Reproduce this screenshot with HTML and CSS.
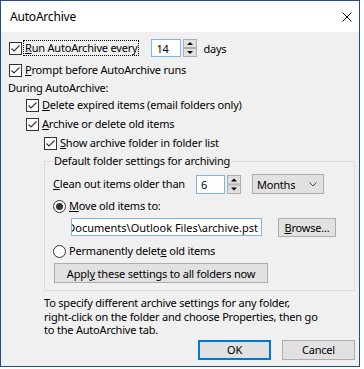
FILE: index.html
```html
<!DOCTYPE html>
<html lang="en">

<head>
    <meta charset="UTF-8">
    <meta name="viewport" content="width=device-width, initial-scale=1.0">
    <title>AutoArchive</title>
    <link rel="stylesheet" href="styles.css">
</head>

<body>
    <div class="window">
        <div class="titlebar">
            <span class="title">AutoArchive</span>
            <svg class="close" width="10" height="10" viewBox="0 0 10 10">
                <path d="M0.5 0.5 L9.5 9.5 M9.5 0.5 L0.5 9.5" stroke="#000" stroke-width="1" fill="none" />
            </svg>
        </div>

        <div class="content">
            <div class="row r-run">
                <span class="check tight"><svg width="13" height="13" viewBox="0 0 13 13"><rect x="0.5" y="0.5" width="12" height="12" fill="#fff" stroke="#333" /><polyline points="2.5,6.5 5,9 10.5,3.5" fill="none" stroke="#333" stroke-width="1.1" /></svg></span>
                <span class="label focus"><u>R</u>un AutoArchive every</span>
                <span class="textbox days-box">14</span>
                <span class="spinner"><svg width="14" height="18" viewBox="0 0 14 18"><rect x="0.5" y="0.5" width="13" height="8" fill="#e1e1e1" stroke="#adadad" /><rect x="0.5" y="9.5" width="13" height="8" fill="#e1e1e1" stroke="#adadad" /><polygon points="4,6 10,6 7,3" fill="#000" /><polygon points="4,12 10,12 7,15" fill="#000" /></svg></span>
                <span class="unit">days</span>
            </div>

            <div class="row r-prompt">
                <span class="check"><svg width="13" height="13" viewBox="0 0 13 13"><rect x="0.5" y="0.5" width="12" height="12" fill="#fff" stroke="#333" /><polyline points="2.5,6.5 5,9 10.5,3.5" fill="none" stroke="#333" stroke-width="1.1" /></svg></span>
                <span class="label"><u>P</u>rompt before AutoArchive runs</span>
            </div>

            <div class="row r-during">
                <span class="label">During AutoArchive:</span>
            </div>

            <div class="row r-delete indent1">
                <span class="check"><svg width="13" height="13" viewBox="0 0 13 13"><rect x="0.5" y="0.5" width="12" height="12" fill="#fff" stroke="#333" /><polyline points="2.5,6.5 5,9 10.5,3.5" fill="none" stroke="#333" stroke-width="1.1" /></svg></span>
                <span class="label"><u>D</u>elete expired items (email folders only)</span>
            </div>

            <div class="row r-archive indent1">
                <span class="check"><svg width="13" height="13" viewBox="0 0 13 13"><rect x="0.5" y="0.5" width="12" height="12" fill="#fff" stroke="#333" /><polyline points="2.5,6.5 5,9 10.5,3.5" fill="none" stroke="#333" stroke-width="1.1" /></svg></span>
                <span class="label"><u>A</u>rchive or delete old items</span>
            </div>

            <div class="row r-show indent2">
                <span class="check"><svg width="13" height="13" viewBox="0 0 13 13"><rect x="0.5" y="0.5" width="12" height="12" fill="#fff" stroke="#333" /><polyline points="2.5,6.5 5,9 10.5,3.5" fill="none" stroke="#333" stroke-width="1.1" /></svg></span>
                <span class="label"><u>S</u>how archive folder in folder list</span>
            </div>

            <fieldset class="group">
                <legend>Default folder settings for archiving</legend>

                <div class="row r-clean">
                    <span class="label clean-label"><u>C</u>lean out items older than</span>
                    <span class="textbox months-box">6</span>
                    <span class="spinner"><svg width="14" height="19" viewBox="0 0 14 19"><rect x="0.5" y="0.5" width="13" height="8.5" fill="#e1e1e1" stroke="#adadad" /><rect x="0.5" y="10" width="13" height="8.5" fill="#e1e1e1" stroke="#adadad" /><polygon points="4,6.5 10,6.5 7,3.5" fill="#000" /><polygon points="4,12.5 10,12.5 7,15.5" fill="#000" /></svg></span>
                    <span class="dropdown">
                        <span>Months</span>
                        <svg width="8" height="5" viewBox="0 0 8 5"><polyline points="0.5,0.5 4,4 7.5,0.5" fill="none" stroke="#444" stroke-width="1" /></svg>
                    </span>
                </div>

                <div class="row r-move">
                    <span class="radio"><svg width="13" height="13" viewBox="0 0 13 13"><circle cx="6.5" cy="6.5" r="6" fill="#fff" stroke="#333" /><circle cx="6.5" cy="6.5" r="3.5" fill="#333" /></svg></span>
                    <span class="label"><u>M</u>ove old items to:</span>
                </div>

                <div class="row r-path">
                    <span class="textbox path-box"><span class="path-text">Documents\Outlook Files\archive.pst</span></span>
                    <span class="button browse"><span><u>B</u>rowse...</span></span>
                </div>

                <div class="row r-perm">
                    <span class="radio"><svg width="13" height="13" viewBox="0 0 13 13"><circle cx="6.5" cy="6.5" r="6" fill="#fff" stroke="#333" /></svg></span>
                    <span class="label">Permanently delet<u>e</u> old items</span>
                </div>

                <div class="row r-apply">
                    <span class="button apply"><span>Appl<u>y</u> these settings to all folders now</span></span>
                </div>
            </fieldset>

            <p class="note">To specify different archive settings for any folder,<br>right-click on the folder and choose Properties, then go<br>to the AutoArchive tab.</p>

            <div class="actions">
                <span class="button ok">OK</span>
                <span class="button cancel">Cancel</span>
            </div>
        </div>
    </div>
</body>

</html>
```

FILE: styles.css
```css
body {
    margin: 0;
    background-color: #fff;
    font-family: 'Noto Sans', 'Liberation Sans', sans-serif;
    font-size: 11px;
    letter-spacing: -0.2px;
    color: #000;
}

u {
    text-decoration-thickness: 1px;
    text-underline-offset: 1px;
}

.window {
    width: 360px;
    height: 367px;
    box-sizing: border-box;
    border: 1px solid #1e4e8c;
    background-color: #f0f0f0;
    display: flex;
    flex-direction: column;
}

.titlebar {
    height: 31px;
    flex: none;
    background-color: #fff;
    display: flex;
    align-items: center;
    justify-content: space-between;
    padding: 0 7px 0 9px;
    font-size: 12px;
}

.close {
    display: block;
}

.content {
    padding: 6px 4px 0 8px;
    display: flex;
    flex-direction: column;
}

.row {
    display: flex;
    align-items: center;
    white-space: nowrap;
}

.check,
.radio {
    width: 13px;
    height: 13px;
    flex: none;
    margin-right: 3px;
}

.check svg,
.radio svg,
.spinner svg {
    display: block;
}

.check.tight {
    margin-right: 1px;
}

.label {
    line-height: 14px;
}

.focus {
    border: 1px dotted #000;
    padding: 0 1px;
}

.r-run {
    height: 20px;
}

.r-prompt {
    height: 20px;
    margin-top: 2px;
}

.r-during {
    height: 16px;
    margin-left: -1px;
}

.r-delete {
    height: 18px;
}

.r-archive {
    height: 20px;
}

.r-show {
    height: 18px;
}

.indent1 {
    padding-left: 17px;
}

.indent2 {
    padding-left: 35px;
}

.textbox {
    box-sizing: border-box;
    height: 18px;
    border: 1px solid #7eb4ea;
    background-color: #fff;
    display: flex;
    align-items: center;
    padding-left: 4px;
}

.days-box {
    width: 30px;
    margin-left: 12px;
}

.spinner {
    margin-left: 2px;
    flex: none;
}

.unit {
    margin-left: 6px;
}

.group {
    margin: 1px 0 0 35px;
    padding: 5px 0 7px 8px;
    border: 1px solid #dcdcdc;
    min-width: 0;
}

.group legend {
    padding: 0 1px;
    line-height: 16px;
}

.r-clean {
    height: 20px;
}

.clean-label {
    width: 143px;
}

.months-box {
    width: 29px;
    height: 19px;
}

.dropdown {
    box-sizing: border-box;
    width: 72px;
    height: 20px;
    margin-left: 11px;
    border: 1px solid #adadad;
    background-color: #e1e1e1;
    display: flex;
    align-items: center;
    justify-content: space-between;
    padding: 0 6px 0 4px;
}

.r-move {
    height: 20px;
    margin-top: 2px;
}

.r-path {
    height: 19px;
    margin-top: 2px;
    align-items: flex-start;
}

.path-box {
    width: 191px;
    margin-left: 18px;
    justify-content: flex-end;
    overflow: hidden;
    padding: 0 3px 0 0;
}

.path-text {
    flex: none;
    letter-spacing: 0;
}

.button {
    box-sizing: border-box;
    border: 1px solid #adadad;
    background-color: #e1e1e1;
    display: flex;
    align-items: center;
    justify-content: center;
}

.browse {
    width: 58px;
    height: 19px;
    margin-left: 16px;
}

.r-perm {
    height: 20px;
    margin-top: 4px;
}

.r-apply {
    height: 20px;
    margin-top: 2px;
}

.apply {
    width: 214px;
    height: 20px;
    margin-left: 1px;
}

.note {
    margin: 5px 0 0 35px;
    line-height: 13.5px;
}

.actions {
    margin-top: 3px;
    display: flex;
    justify-content: flex-end;
    gap: 11px;
}

.ok,
.cancel {
    width: 73px;
    height: 20px;
}

.ok {
    border: 2px solid #0078d7;
}
```
